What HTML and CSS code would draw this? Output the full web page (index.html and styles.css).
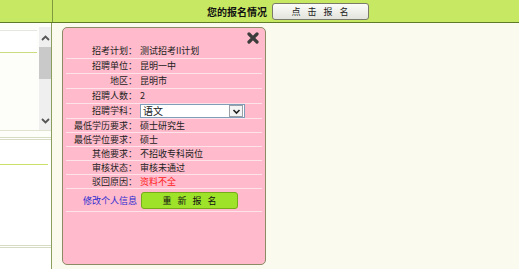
FILE: index.html
```html
<!DOCTYPE html>
<html lang="zh-CN">
<head>
    <meta charset="UTF-8">
    <title>您的报名情况</title>
    <link rel="stylesheet" href="styles.css">
</head>
<body>

<div class="page">
    <!-- 顶部标题栏 -->
    <div class="topbar">
        <div class="topbar-side"></div>
        <div class="topbar-main">
            <span class="topbar-title">您的报名情况</span>
            <button class="btn-apply">点击报名</button>
        </div>
    </div>

    <div class="main">
        <!-- 左侧列表 -->
        <div class="side">
            <div class="side-list">
                <div class="side-items">
                    <div class="side-item"></div>
                </div>
                <div class="scrollbar">
                    <svg class="arrow" width="11" height="8" viewBox="0 0 11 8"><path d="M2 6 L5.5 2.5 L9 6" fill="none" stroke="#555" stroke-width="1.8"/></svg>
                    <div class="thumb"></div>
                    <div class="track"></div>
                    <svg class="arrow" width="11" height="8" viewBox="0 0 11 8"><path d="M2 2 L5.5 5.5 L9 2" fill="none" stroke="#555" stroke-width="1.8"/></svg>
                </div>
            </div>
            <div class="side-box">
                <div class="side-box-head"></div>
            </div>
            <div class="side-box side-box-last"></div>
        </div>

        <!-- 报名信息 -->
        <div class="content">
            <div class="card">
                <div class="card-close">
                    <svg width="12" height="12" viewBox="0 0 12 12"><path d="M2 2 L10 10 M10 2 L2 10" stroke="#3c3c3c" stroke-width="3.2" stroke-linecap="round"/></svg>
                </div>
                <div class="row row-wide"><span class="label">招考计划：</span><span class="value">测试招考II计划</span></div>
                <div class="row row-wide"><span class="label">招聘单位：</span><span class="value">昆明一中</span></div>
                <div class="row row-wide"><span class="label">地区：</span><span class="value">昆明市</span></div>
                <div class="row row-wide"><span class="label">招聘人数：</span><span class="value">2</span></div>
                <div class="row row-wide">
                    <span class="label">招聘学科：</span>
                    <span class="value">
                        <span class="fake-select">
                            <span class="fake-select-text">语文</span>
                            <span class="fake-select-btn"><svg width="9" height="7" viewBox="0 0 9 7"><path d="M1.5 2 L4.5 5 L7.5 2" fill="none" stroke="#222" stroke-width="1.6"/></svg></span>
                        </span>
                    </span>
                </div>
                <div class="row"><span class="label">最低学历要求：</span><span class="value">硕士研究生</span></div>
                <div class="row"><span class="label">最低学位要求：</span><span class="value">硕士</span></div>
                <div class="row"><span class="label">其他要求：</span><span class="value">不招收专科岗位</span></div>
                <div class="row"><span class="label">审核状态：</span><span class="value">审核未通过</span></div>
                <div class="row"><span class="label">驳回原因：</span><span class="value red">资料不全</span></div>
                <div class="row row-action">
                    <span class="label"><a href="#" class="edit-link">修改个人信息</a></span>
                    <span class="value"><button class="btn-reapply">重新报名</button></span>
                </div>
            </div>
        </div>
    </div>
</div>

</body>
</html>
```

FILE: styles.css
```css
body {
    margin: 0;
    background-color: #fff;
    font-family: "Noto Sans CJK SC", "Liberation Sans", sans-serif;
    font-size: 9px;
    color: #222;
}
.page {
    width: 519px;
    height: 269px;
    background-color: #fafaee;
    overflow: hidden;
}
.topbar {
    display: flex;
    height: 22px;
    background-color: #c6e862;
    border-bottom: 1px solid #5f7a28;
}
.topbar-side {
    width: 52px;
    border-right: 1px solid #7f9a3e;
}
.topbar-main {
    display: flex;
    align-items: center;
    padding-left: 154px;
}
.topbar-title {
    font-size: 10px;
    font-weight: bold;
    color: #111;
    width: 65px;
}
.btn-apply {
    width: 97px;
    height: 17px;
    margin-top: 1px;
    padding: 0 0 0 6px;
    border: 1px solid #7a7a6a;
    border-radius: 3px;
    background: linear-gradient(#fbfbf8, #e4e4de);
    font-family: inherit;
    font-size: 9px;
    letter-spacing: 7px;
    color: #222;
}
.main {
    display: flex;
    height: 246px;
}
.side {
    width: 51px;
    background-color: #fdfdf9;
    border-right: 1px solid #8c9e5e;
    padding-top: 4px;
}
.side-list {
    display: flex;
    height: 103px;
    border-bottom: 1px solid #dfe3cf;
}
.side-items {
    width: 37px;
    padding-top: 3px;
}
.side-item {
    height: 21px;
    background-color: #fff;
    border-top: 1px solid #e6e6e0;
    border-bottom: 1px solid #c9dc7e;
}
.scrollbar {
    width: 12px;
    margin-left: 2px;
    background-color: #efefef;
    display: flex;
    flex-direction: column;
    align-items: center;
}
.scrollbar .arrow {
    margin: 7px 0 5px;
}
.thumb {
    width: 12px;
    height: 32px;
    background-color: #c9c9c9;
}
.track {
    flex: 1;
}
.side-box {
    margin-top: 6px;
    height: 105px;
    border-top: 3px double #d6dcc2;
    background-color: #fff;
}
.side-box-head {
    height: 24px;
    width: 48px;
    border-bottom: 1px solid #c9e06a;
}
.side-box-last {
    height: 30px;
    margin-top: 0;
}
.content {
    flex: 1;
    padding: 4px 0 0 10px;
}
.card {
    width: 196px;
    height: 228px;
    padding: 4px 3px;
    background-color: #ffbacb;
    border: 1px solid #8c8c64;
    border-radius: 5px;
}
.card-close {
    display: flex;
    justify-content: flex-end;
    height: 12px;
    padding-right: 3px;
}
.row {
    display: flex;
    height: 13px;
    line-height: 13px;
    border-bottom: 1px solid #ffe3ea;
}
.row-wide {
    height: 14px;
    line-height: 14px;
}
.label {
    width: 71px;
    text-align: right;
    white-space: nowrap;
}
.value {
    padding-left: 3px;
    white-space: nowrap;
}
.red {
    color: #ff1a1a;
}
.fake-select {
    display: flex;
    align-items: center;
    width: 103px;
    height: 12px;
    border: 1px solid #7f9db9;
    background-color: #fff;
    font-size: 10px;
}
.fake-select-text {
    flex: 1;
    padding-left: 2px;
    line-height: 12px;
}
.fake-select-btn {
    display: flex;
    align-items: center;
    justify-content: center;
    width: 12px;
    height: 10px;
    margin-right: 1px;
    border: 1px solid #9aa0a8;
    background-color: #f4f4f4;
}
.row-action {
    height: 22px;
    align-items: center;
}
.edit-link {
    color: #2a2ad0;
    text-decoration: none;
}
.btn-reapply {
    width: 97px;
    height: 17px;
    margin-left: 1px;
    padding: 0 0 0 6px;
    border: 1px solid #74ad16;
    border-radius: 3px;
    background-color: #9ee22a;
    font-family: inherit;
    font-size: 9px;
    letter-spacing: 6px;
    color: #111;
}
```
